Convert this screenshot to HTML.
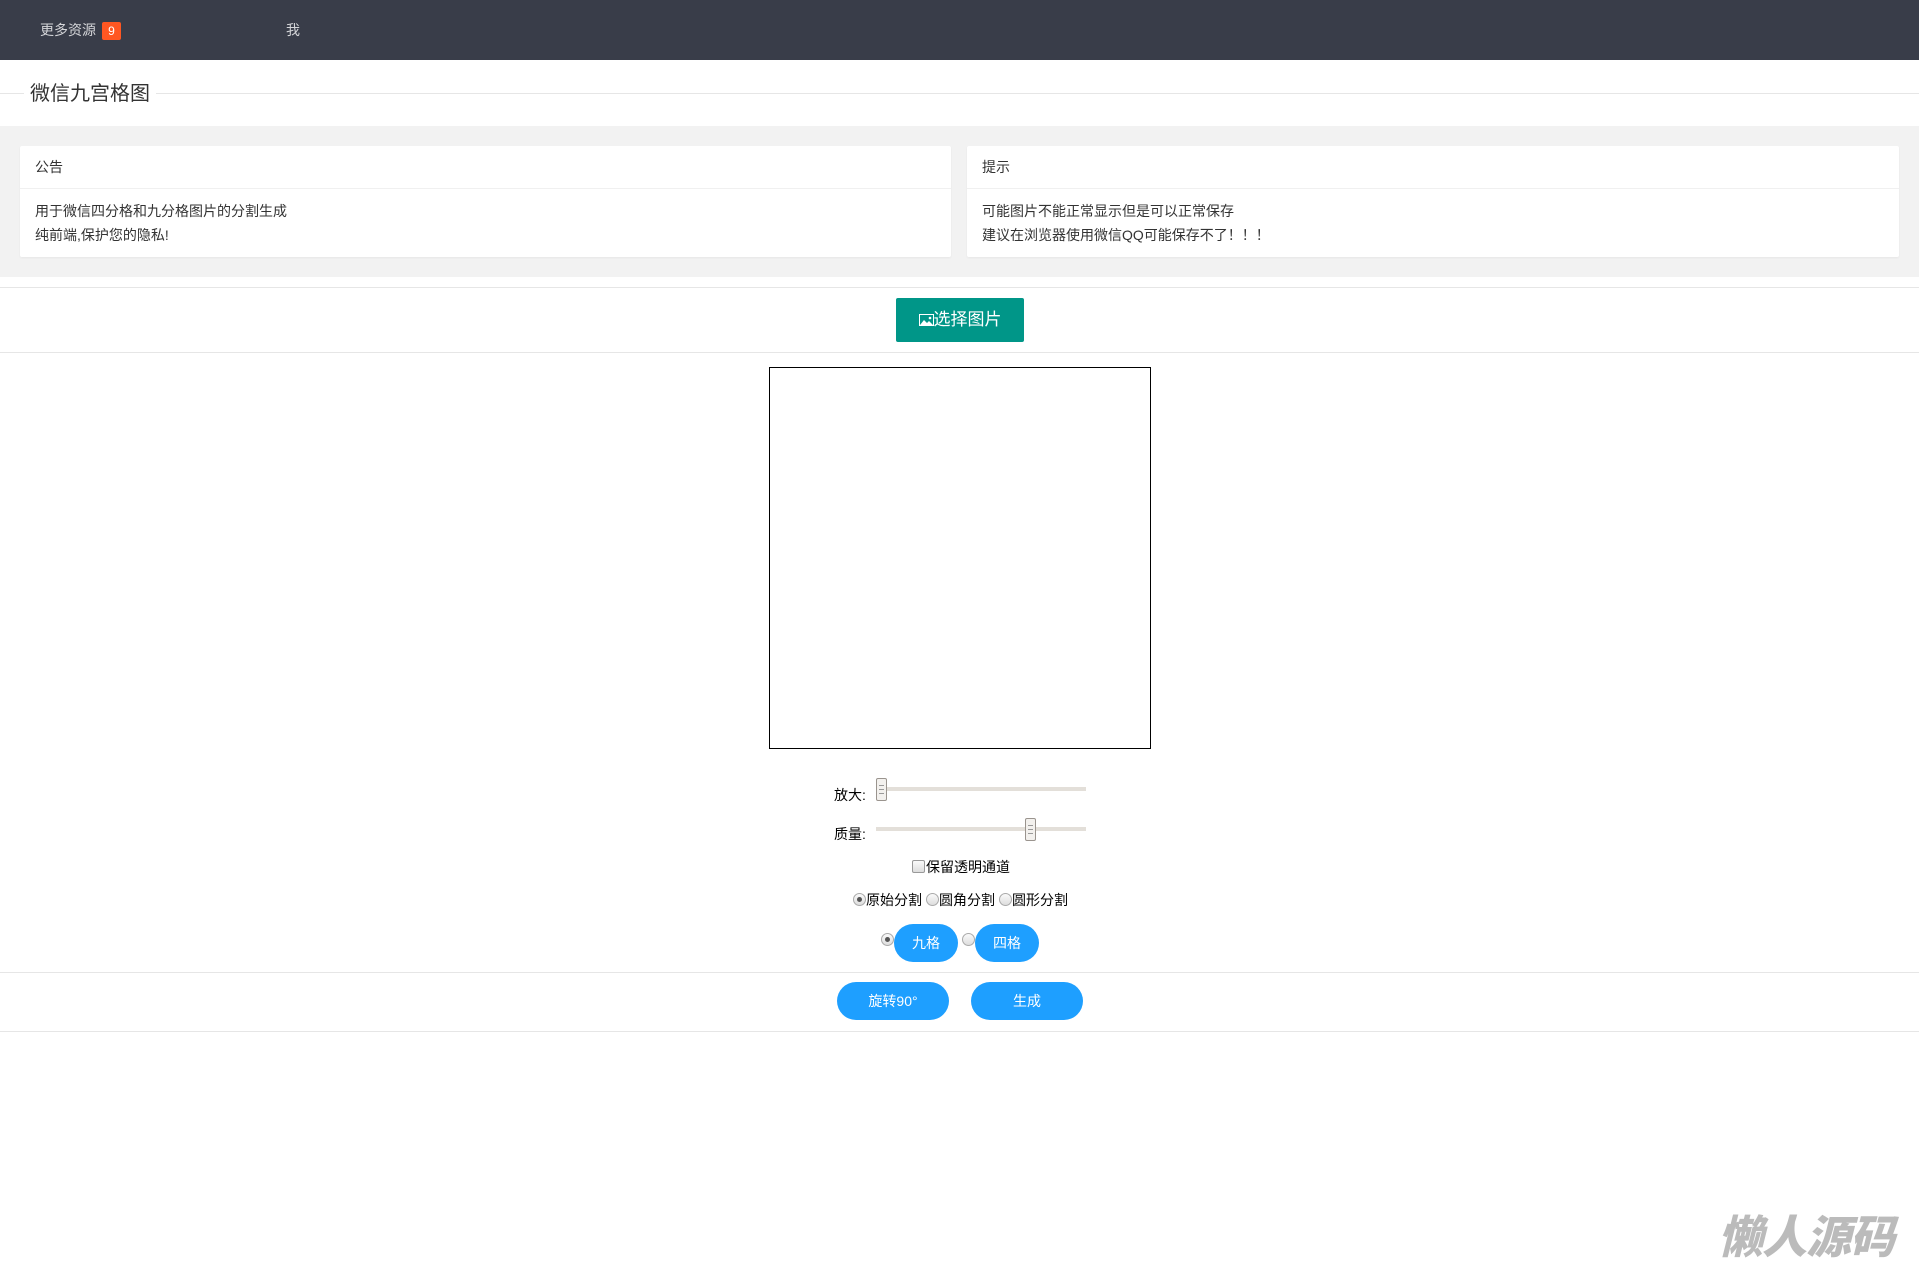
<!DOCTYPE html>
<html><head><meta charset="utf-8"><style>
body{margin:0;width:1919px;height:1270px;position:relative;background:#fff;font-family:"Liberation Sans","Noto Sans CJK SC",sans-serif;overflow:hidden;color:#333}
.a{position:absolute;white-space:nowrap}
.hl{position:absolute;left:0;width:1919px;height:1px;background:#e6e6e6}
.card{position:absolute;top:146px;height:111px;background:#fff;border-radius:2px;box-shadow:0 1px 2px rgba(0,0,0,.05)}
.card .h{position:absolute;left:0;right:0;top:0;height:42px;border-bottom:1px solid #f0f0f0;font-size:14px;line-height:42px;padding-left:15px;color:#333}
.card .b{position:absolute;left:15px;top:54px;font-size:14px;line-height:23.5px;color:#333}
.track{position:absolute;left:876px;width:210px;height:4px;background:#e3dfd9}
.thumb{position:absolute;width:9px;height:21px;background:#f3f1ee;border:1px solid #9a948e;border-radius:2px}
.thumb:after{content:"";position:absolute;left:2px;top:6px;width:5px;height:7px;border-top:1px solid #999;border-bottom:1px solid #999;background:linear-gradient(#999,#999) 0 3px/5px 1px no-repeat}
.rad{position:absolute;width:11px;height:11px;border:1px solid #aaa;border-radius:50%;background:linear-gradient(#fafafa,#ddd)}
.rad.on:after{content:"";position:absolute;left:3px;top:3px;width:5px;height:5px;border-radius:50%;background:#555}
.btn{position:absolute;background:#1e9fff;color:#fff;font-size:14px;text-align:center;border-radius:19px}
</style></head><body>
<div class="a" style="left:0;top:0;width:1919px;height:60px;background:#393d49"></div>
<div class="a" style="left:40px;top:21px;font-size:14px;line-height:18px;color:#d5d6d9">更多资源</div>
<div class="a" style="left:102px;top:22px;width:19px;height:18px;background:#ff5722;color:#fff;font-size:12px;line-height:18px;text-align:center;border-radius:2px">9</div>
<div class="a" style="left:286px;top:21px;font-size:14px;line-height:18px;color:#d5d6d9">我</div>

<div class="hl" style="top:93px"></div>
<div class="a" style="left:24px;top:81px;padding:0 6px;background:#fff;font-size:20px;line-height:26px;color:#333">微信九宫格图</div>

<div class="a" style="left:0;top:126px;width:1919px;height:151px;background:#f2f2f2"></div>
<div class="card" style="left:20px;width:931px"><div class="h">公告</div><div class="b">用于微信四分格和九分格图片的分割生成<br>纯前端,保护您的隐私!</div></div>
<div class="card" style="left:967px;width:932px"><div class="h">提示</div><div class="b">可能图片不能正常显示但是可以正常保存<br>建议在浏览器使用微信QQ可能保存不了！！！</div></div>

<div class="hl" style="top:287px"></div>
<div class="a" style="left:896px;top:298px;width:128px;height:44px;background:#009688;border-radius:2px;color:#fff;font-size:17px;line-height:44px;text-align:center"><svg width="15" height="12" viewBox="0 0 15 12" style="vertical-align:-1px"><rect x=".5" y=".5" width="14" height="11" fill="none" stroke="#fff"/><path d="M1 11 L5 6 L8 9 L10 7 L14 11Z" fill="#fff"/><circle cx="11" cy="4" r="1.3" fill="#fff"/></svg>选择图片</div>
<div class="hl" style="top:352px"></div>

<div class="a" style="left:769px;top:367px;width:380px;height:380px;border:1px solid #000"></div>

<div class="a" style="left:834px;top:786px;font-size:14px;line-height:18px;color:#000">放大:</div>
<div class="track" style="top:787px"></div>
<div class="thumb" style="left:876px;top:778px"></div>
<div class="a" style="left:834px;top:825px;font-size:14px;line-height:18px;color:#000">质量:</div>
<div class="track" style="top:827px"></div>
<div class="thumb" style="left:1025px;top:818px"></div>

<div class="a" style="left:912px;top:860px;width:11px;height:11px;border:1px solid #999;border-radius:2px;background:linear-gradient(#fafafa,#ddd)"></div>
<div class="a" style="left:926px;top:858px;font-size:14px;line-height:18px;color:#000">保留透明通道</div>

<div class="rad on" style="left:853px;top:893px"></div>
<div class="a" style="left:866px;top:891px;font-size:14px;line-height:18px;color:#000">原始分割</div>
<div class="rad" style="left:926px;top:893px"></div>
<div class="a" style="left:939px;top:891px;font-size:14px;line-height:18px;color:#000">圆角分割</div>
<div class="rad" style="left:999px;top:893px"></div>
<div class="a" style="left:1012px;top:891px;font-size:14px;line-height:18px;color:#000">圆形分割</div>

<div class="rad on" style="left:881px;top:933px"></div>
<div class="btn" style="left:894px;top:924px;width:64px;height:38px;line-height:38px">九格</div>
<div class="rad" style="left:962px;top:933px"></div>
<div class="btn" style="left:975px;top:924px;width:64px;height:38px;line-height:38px">四格</div>

<div class="hl" style="top:972px"></div>
<div class="btn" style="left:837px;top:982px;width:112px;height:38px;line-height:38px">旋转90°</div>
<div class="btn" style="left:971px;top:982px;width:112px;height:38px;line-height:38px">生成</div>
<div class="hl" style="top:1031px"></div>

<div class="a" style="left:1718px;top:1206px;font-size:45px;line-height:56px;font-weight:900;font-style:italic;color:#bbb;font-family:'Noto Sans CJK SC',sans-serif;letter-spacing:-1px">懒人源码</div>
</body></html>
